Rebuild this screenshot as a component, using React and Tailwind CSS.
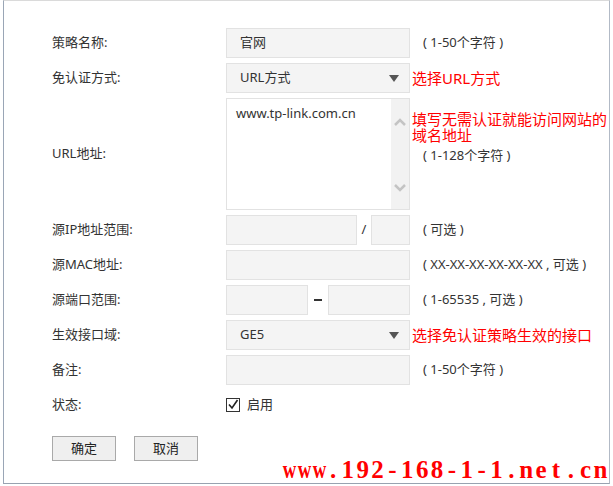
import React from "react";

const box = "h-[30px] bg-[#f4f4f4] border border-[#e2e2e2]";

function Row({ label, children, after, h = "h-[30px]" }) {
  return (
    <div className={`flex items-center ${h}`}>
      <div className="w-[174px] shrink-0 text-[13px] text-[#333]">{label}</div>
      <div className="w-[184px] shrink-0 flex items-center">{children}</div>
      {after}
    </div>
  );
}

function Hint({ children }) {
  return <span className="ml-[13px] text-[13px] text-[#333] whitespace-pre">{children}</span>;
}

function Note({ children }) {
  return <span className="ml-[2px] text-[15px] text-[#ff0000] leading-[17px]">{children}</span>;
}

function Select({ value }) {
  return (
    <div className={`${box} w-full flex items-center justify-between pl-[13px] pr-[10px] text-[13px] text-[#333]`}>
      <span>{value}</span>
      <svg width="10" height="7" viewBox="0 0 10 7">
        <path d="M0 0 H10 L5 7 Z" fill="#555" />
      </svg>
    </div>
  );
}

function Input({ value = "", w = "w-full" }) {
  return (
    <div className={`${box} ${w} flex items-center pl-[13px] text-[13px] text-[#333]`}>{value}</div>
  );
}

const mark = "www.192-168-1-1.net.cn".split("");

export default function App() {
  return (
    <div className="relative w-[613px] h-[486px] bg-white font-['Noto_Sans','Noto_Sans_CJK_SC',sans-serif]">
      <div className="ml-[3px] w-[607px] h-[484px] border-l border-l-[#9aa6b6] border-t border-t-[#dadada] border-r border-r-[#b2bac6] border-b border-b-[#98a2b0] pt-[27px] pl-[48px] flex flex-col gap-[5px]">
        <Row label="策略名称:" after={<Hint>( 1-50个字符 )</Hint>}>
          <Input value="官网" />
        </Row>
        <Row label="免认证方式:" after={<Note>选择URL方式</Note>}>
          <Select value="URL方式" />
        </Row>
        <div className="flex items-center h-[112px]">
          <div className="w-[174px] shrink-0 text-[13px] text-[#333]">URL地址:</div>
          <div className="w-[184px] shrink-0 h-[112px] border border-[#e2e2e2] bg-white flex">
            <div className="flex-1 pl-[9px] pt-[5px] text-[13px] text-[#333]">www.tp-link.com.cn</div>
            <div className="w-[18px] bg-[#f2f2f2] flex flex-col items-center justify-between pt-[19px] pb-[17px]">
              <svg width="12" height="8" viewBox="0 0 12 8">
                <polyline points="1,7 6,2 11,7" fill="none" stroke="#c4c4c4" strokeWidth="2.5" />
              </svg>
              <svg width="12" height="8" viewBox="0 0 12 8">
                <polyline points="1,1 6,6 11,1" fill="none" stroke="#c4c4c4" strokeWidth="2.5" />
              </svg>
            </div>
          </div>
          <div className="self-start pt-[13px] flex flex-col">
            <p className="ml-[2px] w-[196px] text-[15px] text-[#ff0000] leading-[16px]">填写无需认证就能访问网站的域名地址</p>
            <span className="mt-[4px] ml-[13px] text-[13px] text-[#333] leading-[17px] whitespace-pre">( 1-128个字符 )</span>
          </div>
        </div>
        <Row label="源IP地址范围:" after={<Hint>( 可选 )</Hint>}>
          <Input w="w-[131px]" />
          <span className="w-[14px] text-center text-[13px] text-[#333]">/</span>
          <Input w="w-[39px]" />
        </Row>
        <Row label="源MAC地址:" after={<Hint>( XX-XX-XX-XX-XX-XX , 可选 )</Hint>}>
          <Input />
        </Row>
        <Row label="源端口范围:" after={<Hint>( 1-65535 , 可选 )</Hint>}>
          <Input w="w-[82px]" />
          <span className="w-[20px] flex justify-center">
            <span className="w-[8px] h-[1.5px] bg-[#333]"></span>
          </span>
          <Input w="w-[82px]" />
        </Row>
        <Row label="生效接口域:" after={<Note>选择免认证策略生效的接口</Note>}>
          <Select value="GE5" />
        </Row>
        <Row label="备注:" after={<Hint>( 1-50个字符 )</Hint>}>
          <Input />
        </Row>
        <Row label="状态:">
          <div className="flex items-center gap-[7px] text-[13px] text-[#333]">
            <svg width="14" height="14" viewBox="0 0 14 14">
              <rect x="0.5" y="0.5" width="13" height="13" fill="white" stroke="#333" />
              <polyline points="3,6.5 6,10 11.5,2" fill="none" stroke="#222" strokeWidth="1.6" />
            </svg>
            <span>启用</span>
          </div>
        </Row>
        <div className="flex gap-[18px] mt-[11px]">
          <button className="w-[64px] h-[25px] bg-[#efefef] border border-[#a9a9a9] text-[13px] text-[#222]">确定</button>
          <button className="w-[64px] h-[25px] bg-[#efefef] border border-[#a9a9a9] text-[13px] text-[#222]">取消</button>
        </div>
      </div>
      <div className="absolute left-[281px] top-[455px] flex text-[25px] leading-[30px] font-bold text-[#ff0000] font-['Liberation_Serif',serif]">
        {mark.map((c, i) => (
          <span
            key={i}
            className={c === "w" ? "inline-block w-[14.86px] text-center scale-x-75" : "inline-block w-[14.86px] text-center"}
          >
            {c}
          </span>
        ))}
      </div>
    </div>
  );
}
